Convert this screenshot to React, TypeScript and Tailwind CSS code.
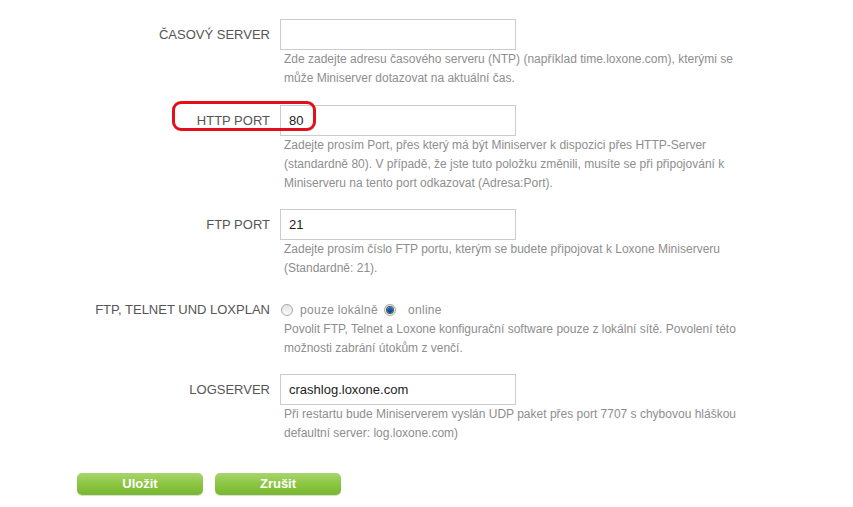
import React from "react";

const font = { fontFamily: '"Liberation Sans", Arial, sans-serif' };

function Label({ children }: { children: React.ReactNode }) {
  return (
    <div className="w-[280px] shrink-0 pr-[10px] text-right text-[13px] leading-[31px] text-[#555]">
      {children}
    </div>
  );
}

function Input({ value }: { value?: string }) {
  return (
    <div className="h-[31px] w-[236px] border border-[#ccc] bg-white pl-[8px] text-[13px] leading-[29px] text-[#222]">
      {value}
    </div>
  );
}

function Help({ children }: { children: React.ReactNode }) {
  return <div className="w-[500px] pl-[4px] text-[12px] leading-[19px] text-[#8e8e8e]">{children}</div>;
}

function Radio({ checked }: { checked?: boolean }) {
  return (
    <span className="inline-flex h-[12px] w-[12px] items-center justify-center rounded-full border border-[#a9a9a9] bg-gradient-to-b from-[#e2e2e2] to-[#fdfdfd]">
      {checked && <span className="h-[6px] w-[6px] rounded-full bg-gradient-to-b from-[#1b78c9] to-[#0a3f7a] ring-1 ring-[#555]" />}
    </span>
  );
}

function Button({ children }: { children: React.ReactNode }) {
  return (
    <div className="flex h-[22px] w-[126px] items-center justify-center rounded-[5px] bg-gradient-to-b from-[#a8d56d] via-[#8cc541] to-[#78b72f] text-[13px] font-bold text-white shadow-[0_1px_1px_rgba(0,0,0,0.15)]">
      {children}
    </div>
  );
}

export default function App() {
  return (
    <div className="min-h-[507px] w-[853px] bg-white pt-[19px]" style={font}>
      <div className="flex">
        <Label>ČASOVÝ SERVER</Label>
        <div>
          <Input />
          <Help>
            Zde zadejte adresu časového serveru (NTP) (například time.loxone.com), kterými se
            <br />
            může Miniserver dotazovat na aktuální čas.
          </Help>
        </div>
      </div>

      <div className="relative mt-[17px] flex">
        <Label>HTTP PORT</Label>
        <div>
          <Input value="80" />
          <Help>
            Zadejte prosím Port, přes který má být Miniserver k dispozici přes HTTP-Server
            <br />
            (standardně 80). V případě, že jste tuto položku změnili, musíte se při připojování k
            <br />
            Miniserveru na tento port odkazovat (Adresa:Port).
          </Help>
        </div>
        <div className="absolute left-[172px] top-[-4px] h-[30px] w-[144px] rounded-[9px] border-[3px] border-[#e2101b]" />
      </div>

      <div className="mt-[16px] flex">
        <Label>FTP PORT</Label>
        <div>
          <Input value="21" />
          <Help>
            Zadejte prosím číslo FTP portu, kterým se budete připojovat k Loxone Miniserveru
            <br />
            (Standardně: 21).
          </Help>
        </div>
      </div>

      <div className="mt-[22px] flex">
        <div className="w-[280px] shrink-0 pr-[10px] text-right text-[13px] leading-[20px] text-[#555]">
          FTP, TELNET UND LOXPLAN
        </div>
        <div>
          <div className="flex h-[20px] items-center pl-[1px] text-[12px] tracking-[0.3px] text-[#8e8e8e]">
            <Radio />
            <span className="ml-[7px]">pouze lokálně</span>
            <span className="ml-[6px] flex">
              <Radio checked />
            </span>
            <span className="ml-[12px]">online</span>
          </div>
          <Help>
            Povolit FTP, Telnet a Loxone konfigurační software pouze z lokální sítě. Povolení této
            <br />
            možnosti zabrání útokům z venčí.
          </Help>
        </div>
      </div>

      <div className="mt-[16px] flex">
        <Label>LOGSERVER</Label>
        <div>
          <Input value="crashlog.loxone.com" />
          <Help>
            Při restartu bude Miniserverem vyslán UDP paket přes port 7707 s chybovou hláškou
            <br />
            defaultní server: log.loxone.com)
          </Help>
        </div>
      </div>

      <div className="mt-[30px] flex gap-[12px] pl-[77px]">
        <Button>Uložit</Button>
        <Button>Zrušit</Button>
      </div>
    </div>
  );
}
